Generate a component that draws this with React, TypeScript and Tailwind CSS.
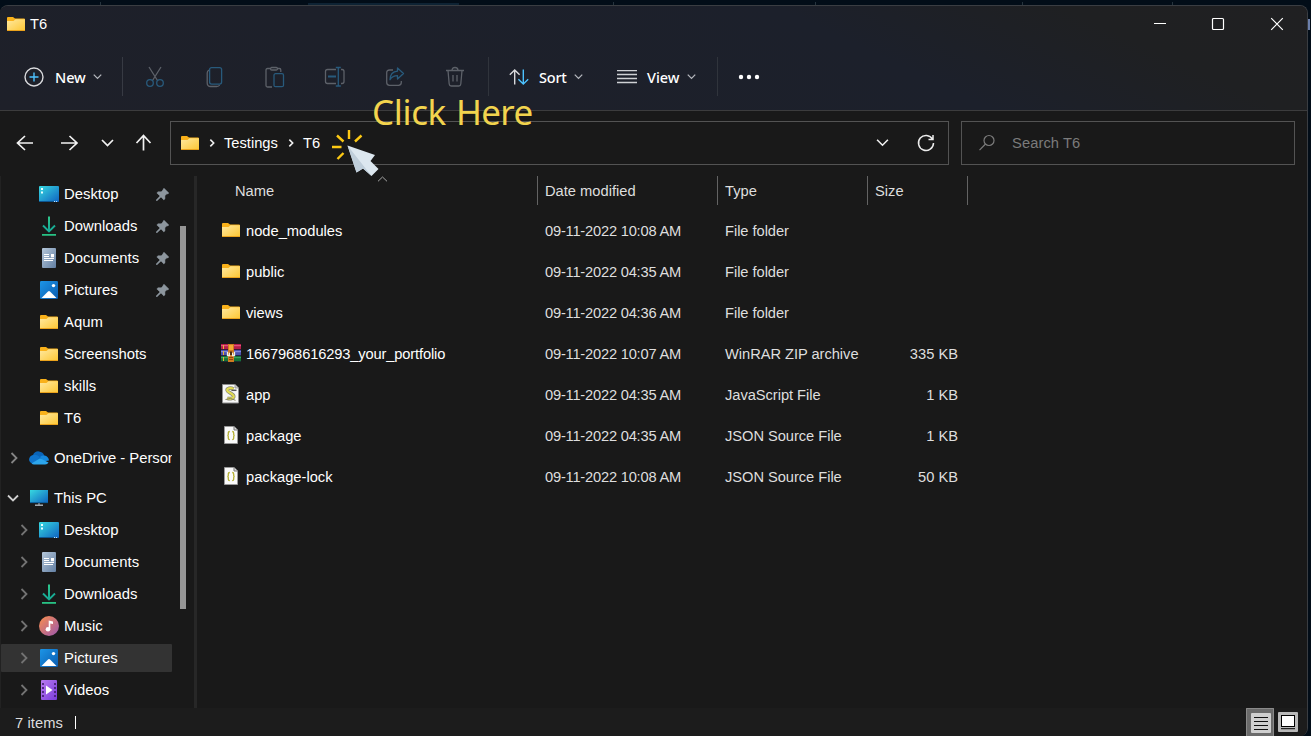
import React from "react";

type IconProps = { className?: string };

const Folder = ({ className = "" }: IconProps) => (
  <svg width="18" height="14" viewBox="0 0 18 14" className={`shrink-0 ${className}`}>
    <defs>
      <linearGradient id="folderFace" x1="0" y1="0" x2="1" y2="1">
        <stop offset="0" stopColor="#ffe9a0" />
        <stop offset="1" stopColor="#fdc632" />
      </linearGradient>
    </defs>
    <path d="M0 1q0-1 1-1h5l2 1.5h9q1 0 1 1V12H0z" fill="#f9b11a" />
    <path d="M0 4h6.5L8.5 2.3H18V14H0z" fill="url(#folderFace)" />
    <path d="M0 13.5h18" stroke="#eaa21c" />
  </svg>
);

const DesktopIcon = () => (
  <svg width="20" height="16" viewBox="0 0 20 16" className="shrink-0">
    <defs>
      <linearGradient id="desk" x1="0" y1="0" x2="1" y2="1">
        <stop offset="0" stopColor="#37d8e0" />
        <stop offset="1" stopColor="#0f62c0" />
      </linearGradient>
    </defs>
    <rect width="20" height="16" rx="1" fill="url(#desk)" />
    <path d="M2 2h2v2H2zM2 5.5h2v2H2z" fill="#e9ffff" />
    <path d="M0 15.5h15" stroke="#0d5590" />
    <path d="M15 15.5h1M17 15.5h1" stroke="#bfe4ff" />
  </svg>
);

const DownloadIcon = () => (
  <svg width="20" height="20" viewBox="0 0 20 20" className="shrink-0" fill="none">
    <defs>
      <linearGradient id="down" x1="0" y1="0" x2="0" y2="1">
        <stop offset="0" stopColor="#2fca8c" />
        <stop offset="1" stopColor="#14a596" />
      </linearGradient>
    </defs>
    <path d="M9 .5h2V15H9z" fill="url(#down)" />
    <path d="M4 9.5l6 6 6-6" stroke="#19ac94" strokeWidth="1.9" />
    <path d="M3 18.9h14" stroke="#27c284" strokeWidth="1.8" />
  </svg>
);

const DocumentIcon = () => (
  <svg width="20" height="20" viewBox="0 0 20 20" className="shrink-0">
    <defs>
      <linearGradient id="doc" x1="0" y1="0" x2="1" y2="1">
        <stop offset="0" stopColor="#b5c7da" />
        <stop offset="1" stopColor="#627fa3" />
      </linearGradient>
    </defs>
    <rect x="3" width="14" height="20" rx="1" fill="url(#doc)" />
    <path d="M5 6.5h5M5 8.5h5M5 10.500h10M5 12.500h9" stroke="#fff" strokeWidth="1.1" />
    <path d="M12 6h3v3.3h-3z" fill="#fff" />
  </svg>
);

const PictureIcon = () => (
  <svg width="18" height="18" viewBox="0 0 18 18" className="mx-px shrink-0">
    <defs>
      <linearGradient id="pic" x1="0" y1="0" x2="1" y2="1">
        <stop offset="0" stopColor="#1c95e6" />
        <stop offset="1" stopColor="#0a5cb0" />
      </linearGradient>
    </defs>
    <rect width="18" height="18" rx="1.2" fill="url(#pic)" />
    <path d="M1.500 17L8 10.400q1-.9 2 0L16.500 17z" fill="#fff" />
    <circle cx="13.500" cy="4.600" r="1.700" fill="#fff" />
  </svg>
);

const MusicIcon = () => (
  <svg width="20" height="20" viewBox="0 0 20 20" className="shrink-0">
    <defs>
      <linearGradient id="mus" x1="0" y1="0" x2="1" y2="1">
        <stop offset="0.1" stopColor="#f28a55" />
        <stop offset="1" stopColor="#9a56b0" />
      </linearGradient>
    </defs>
    <circle cx="10" cy="10" r="10" fill="url(#mus)" />
    <circle cx="9" cy="13.2" r="2.3" fill="#fff" />
    <path d="M9.700 4.400l4.300 1.200v2.500l-2.700-.7v6h-1.600z" fill="#fff" />
  </svg>
);

const VideoIcon = () => (
  <svg width="20" height="20" viewBox="0 0 20 20" className="shrink-0">
    <defs>
      <linearGradient id="vid" x1="0" y1="0" x2="1" y2="1">
        <stop offset="0" stopColor="#b87af0" />
        <stop offset="1" stopColor="#7a3cdc" />
      </linearGradient>
    </defs>
    <rect x="2" width="16" height="20" rx="1" fill="url(#vid)" />
    <path d="M4 3v15M16 3v15" stroke="#3f1c6c" strokeWidth="1.6" strokeDasharray="2 2" />
    <path d="M7 5.500l6.500 4.500L7 14.500z" fill="#fff" />
  </svg>
);

const CloudIcon = () => (
  <svg width="20" height="14" viewBox="0 0 20 14" className="shrink-0">
    <path d="M4.500 12.500A4.400 4.400 0 0 1 4 4a6 6 0 0 1 11.300.8L17 8 5 12.500z" fill="#0a64b8" />
    <path d="M4 4.200C6 3 9 4 11 6.300L5 12.700C-1.500 12.800-1.300 5 4 4.200z" fill="#0f74cc" />
    <path d="M11 6a5 5 0 0 1 4.400-1.400C18 5 20 7 20 9.500l-6 1z" fill="#1587dc" />
    <path d="M2.500 12.500L11 7.200l8.500 4.300Q18.500 13.500 16 13.500H5Q3.500 13.500 2.500 12.500z" fill="#2ca5ec" />
  </svg>
);

const PcIcon = () => (
  <svg width="18" height="16" viewBox="0 0 18 16" className="mx-px shrink-0">
    <rect width="18" height="13" fill="url(#desk)" />
    <path d="M0 12.600h18" stroke="#0b5d9a" />
    <path d="M8 13.300h2v1.500H8z" fill="#76838f" />
    <path d="M5 15.200h8" stroke="#b9c2ca" strokeWidth="1.300" />
  </svg>
);

const Pin = () => (
  <svg width="13" height="13" viewBox="0 0 13 13" className="shrink-0">
    <path
      d="M8 .2L12.800 5l-1 1-.9-.2-2 2 .1 3-1.200 1.100L5 9 1 12.800H.2v-.8L4 8 .8 4.900l1.300-1.200 3.100.1 2-2L7 1.200z"
      fill="#8d969e"
      stroke="#8d969e"
      strokeWidth=".5"
    />
  </svg>
);

const Chevron = ({
  dir = "right",
  color = "#858585",
  w = 1.8,
  size = 12,
}: {
  dir?: "right" | "down";
  color?: string;
  w?: number;
  size?: number;
}) => (
  <svg width={size} height={size} viewBox="0 0 12 12" fill="none" stroke={color} strokeWidth={w} className="shrink-0">
    {dir === "right" ? <path d="M3.500 1l5 5-5 5" /> : <path d="M1 3.500l5 5 5-5" />}
  </svg>
);

const ZipIcon = () => (
  <svg width="20" height="18" viewBox="0 0 20 18" className="shrink-0">
    <path d="M0 0h20v6H0z" fill="#b51d4a" />
    <path d="M0 1h20v1.200H0z" fill="#e0527c" />
    <path d="M0 6h20v6H0z" fill="#4b50ae" />
    <path d="M0 7h20v1.200H0z" fill="#8388dc" />
    <path d="M0 12h20v6H0z" fill="#157337" />
    <path d="M0 13h20v1.200H0z" fill="#3aa35f" />
    <path d="M0 5.500h20M0 11.500h20M0 17.600h20" stroke="#1d1733" strokeWidth=".8" />
    <path d="M2.500 1v4M2.500 7v4M2.500 13v4" stroke="#e8b13a" />
    <path d="M7 0h6v18H7z" fill="#cf7a20" />
    <path d="M8 1h4v5H8z" fill="#f2aa35" />
    <path d="M6.500 8v3.500h2V9.300h3v2.200h2V8" fill="none" stroke="#f1efe6" strokeWidth="1.300" />
    <path d="M9 7.500h2V11H9z" fill="#4b2a12" />
    <path d="M8 13.500h4M8 15.500h4" stroke="#8b3d12" strokeWidth=".9" />
  </svg>
);

const JsIcon = () => (
  <svg width="18" height="20" viewBox="0 0 18 20" className="mx-px shrink-0">
    <path d="M.5.5h12.500l3.500 3.500v15H.5z" fill="#f7f7f7" stroke="#8c8c8c" />
    <path d="M13 .5v3.500h3.500" fill="#cfcfcf" stroke="#8c8c8c" strokeWidth=".8" />
    <path
      d="M11.500 5C8.500 3.300 4.800 4.300 5.200 6.500c.4 2 6.300 3 6.500 5.700.2 2.300-3.500 3-6.500 2"
      fill="none"
      stroke="#8a8a78"
      strokeWidth="3.600"
    />
    <path
      d="M11.500 5C8.500 3.300 4.800 4.300 5.200 6.500c.4 2 6.300 3 6.500 5.700.2 2.300-3.500 3-6.500 2"
      fill="none"
      stroke="#e2dc52"
      strokeWidth="2.200"
    />
    <path d="M3.500 15.500q5-2.500 10 .8" fill="none" stroke="#85855f" />
    <path d="M9.500 6.300h5" stroke="#555" strokeWidth="1.500" />
  </svg>
);

const JsonIcon = () => (
  <svg width="14" height="18" viewBox="0 0 14 18" className="mx-[3px] shrink-0">
    <path d="M.5.5H10L13.500 4v13.500H.5z" fill="#fafafa" stroke="#9a9a9a" />
    <path d="M10 .5V4h3.500" fill="#ddd" stroke="#777" />
    <path
      d="M5.800 5.500q-1.500 0-1.500 1.400v1.500q0 1-1 1 1 0 1 1v1.900q0 1.400 1.500 1.400M8.200 5.500q1.500 0 1.500 1.400v1.500q0 1 1 1-1 0-1 1v1.900q0 1.400-1.500 1.400"
      fill="none"
      stroke="#b5b034"
      strokeWidth="1.300"
    />
  </svg>
);

const quick = [
  { icon: <DesktopIcon />, label: "Desktop", pin: true },
  { icon: <DownloadIcon />, label: "Downloads", pin: true },
  { icon: <DocumentIcon />, label: "Documents", pin: true },
  { icon: <PictureIcon />, label: "Pictures", pin: true },
  { icon: <Folder className="mx-px" />, label: "Aqum" },
  { icon: <Folder className="mx-px" />, label: "Screenshots" },
  { icon: <Folder className="mx-px" />, label: "skills" },
  { icon: <Folder className="mx-px" />, label: "T6" },
];

const pc = [
  { icon: <DesktopIcon />, label: "Desktop" },
  { icon: <DocumentIcon />, label: "Documents" },
  { icon: <DownloadIcon />, label: "Downloads" },
  { icon: <MusicIcon />, label: "Music" },
  { icon: <PictureIcon />, label: "Pictures", active: true },
  { icon: <VideoIcon />, label: "Videos" },
];

const files = [
  { icon: <Folder className="mx-px" />, name: "node_modules", date: "09-11-2022 10:08 AM", type: "File folder", size: "" },
  { icon: <Folder className="mx-px" />, name: "public", date: "09-11-2022 04:35 AM", type: "File folder", size: "" },
  { icon: <Folder className="mx-px" />, name: "views", date: "09-11-2022 04:36 AM", type: "File folder", size: "" },
  { icon: <ZipIcon />, name: "1667968616293_your_portfolio", date: "09-11-2022 10:07 AM", type: "WinRAR ZIP archive", size: "335 KB", tight: true },
  { icon: <JsIcon />, name: "app", date: "09-11-2022 04:35 AM", type: "JavaScript File", size: "1 KB" },
  { icon: <JsonIcon />, name: "package", date: "09-11-2022 04:35 AM", type: "JSON Source File", size: "1 KB" },
  { icon: <JsonIcon />, name: "package-lock", date: "09-11-2022 10:08 AM", type: "JSON Source File", size: "50 KB" },
];

const GREY = "#5d6169";
const BLUE = "#285a7c";

const Tool = ({ children }: { children: React.ReactNode }) => (
  <div className="flex w-[60px] justify-center">
    <svg width="22" height="22" viewBox="0 0 22 22" fill="none" strokeWidth="1.3">
      {children}
    </svg>
  </div>
);

const ToolChevron = () => (
  <span className="flex">
    <Chevron dir="down" color="#b5b8be" w={1.7} size={9} />
  </span>
);

const Toolbar = () => (
  <div className="flex h-[68px] items-center pt-[1px] font-['Noto_Sans',sans-serif] text-[14.500px] font-medium text-white">
    <div className="flex h-full w-[122px] items-center pl-6">
      <svg width="20" height="20" viewBox="0 0 20 20" fill="none" className="shrink-0">
        <circle cx="10" cy="10" r="9" stroke="#d8d9dc" strokeWidth="1.400" />
        <path d="M10 5.500v9M5.500 10h9" stroke="#4cc2ff" strokeWidth="1.400" />
      </svg>
      <span className="ml-[11px] mr-[7px] w-[31px] tracking-[-0.100px]">New</span>
      <ToolChevron />
    </div>
    <div className="h-[39px] w-px bg-[#373a43]" />
    <div className="ml-[2px] flex">
      <Tool>
        <path d="M5 1l8.800 14M17 1L8.200 15" stroke={GREY} />
        <circle cx="6" cy="17" r="3.300" stroke={BLUE} />
        <circle cx="16" cy="17" r="3.300" stroke={BLUE} />
      </Tool>
      <Tool>
        <path d="M5 4Q3.200 5 3.200 7v10q0 3.500 3.500 3.500h6q2 0 3-1.500" stroke={GREY} />
        <rect x="5.600" y="1.600" width="12" height="16.500" rx="2" stroke={BLUE} />
      </Tool>
      <Tool>
        <path d="M6 2.500H3.500q-1.500 0-1.500 1.500v15.500q0 1.500 1.500 1.500h4.500M14 2.500h1.500q1.300 0 1.300 1.500v2" stroke={GREY} />
        <rect x="6.500" y="1.500" width="7" height="2.500" rx="1.200" stroke={GREY} />
        <rect x="10" y="7.700" width="9.500" height="13" rx="1.500" stroke={BLUE} />
      </Tool>
      <Tool>
        <path d="M12 3.500H3.500q-2 0-2 2v10q0 2 2 2H12M17 3.500h1q2 0 2 2v10q0 2-2 2h-1" stroke={GREY} />
        <path d="M4 10.500h8" stroke={BLUE} strokeWidth="2" />
        <path d="M14.300 1.500v18.500M11.800 1.500h5M11.800 20h5" stroke={BLUE} />
      </Tool>
      <Tool>
        <path d="M9 4H5.500Q2.700 4 2.700 6.800v9.700q0 2.800 2.800 2.800h9q2.800 0 2.800-2.800V15" stroke={GREY} />
        <path d="M13.500 2l6 5.500-6 5.500v-3.300q-5 0-7.500 4 .3-8 7.500-8.500z" stroke={BLUE} strokeLinejoin="round" />
      </Tool>
      <Tool>
        <path d="M2 4.500h18M8 4.500q0-3 3-3t3 3M4 4.500l1.200 13.500q.2 2 2 2h7.600q1.800 0 2-2L18 4.500M9 9v6.500M13 9v6.500" stroke={GREY} />
      </Tool>
    </div>
    <div className="ml-[3px] h-[39px] w-px bg-[#30343c]" />
    <div className="flex items-center pl-5">
      <svg width="20" height="18" viewBox="0 0 20 18" fill="none" strokeWidth="1.400">
        <path d="M5.700 16.500V2M.8 6.800L5.700 2l4.900 4.800" stroke="#d8d9dc" />
        <path d="M14.300 1.500V16M9.400 11.200l4.900 4.800 4.900-4.800" stroke="#4cc2ff" />
      </svg>
      <span className="ml-[10px] mr-[6px] w-[29px] tracking-[-0.200px]">Sort</span>
      <ToolChevron />
    </div>
    <div className="flex items-center pl-[34px]">
      <svg width="20" height="14" viewBox="0 0 20 14" stroke="#cfd1d5" strokeWidth="1.300">
        <path d="M0 .5h20M0 4.500h20M0 8.500h20M0 12.500h20" />
      </svg>
      <span className="ml-[10px] mr-[7px] w-[33px]">View</span>
      <ToolChevron />
    </div>
    <div className="ml-[21px] h-[39px] w-px bg-[#30343c]" />
    <svg width="22" height="6" viewBox="0 0 22 6" fill="#fff" className="ml-5">
      <circle cx="3" cy="3" r="2.200" />
      <circle cx="11" cy="3" r="2.200" />
      <circle cx="19" cy="3" r="2.200" />
    </svg>
  </div>
);

const AddressRow = () => (
  <div className="flex h-[65px] items-start pt-[10px]">
    <div className="flex h-[44px] w-[170px] items-center">
      <svg width="170" height="24" viewBox="0 0 170 24" fill="none" stroke="#f2f2f2" strokeWidth="1.700">
        <path d="M33 12H18M25 5l-7.500 7 7.500 7" />
        <path d="M61 12h15M69.500 5l7.500 7-7.500 7" />
        <path d="M102 9l5.500 5.500L113 9" />
        <path d="M143.500 19.500V5M136.500 12l7-7.500 7 7.500" />
      </svg>
    </div>
    <div className="flex h-[44px] w-[779px] items-center border border-[#535353] pb-px pl-[10px] pr-3 text-white">
      <Folder />
      <span className="ml-[9px] flex"><Chevron color="#eee" w={2.400} size={8} /></span>
      <span className="ml-[8px] w-[55px]">Testings</span>
      <span className="ml-[8px] flex"><Chevron color="#eee" w={2.400} size={8} /></span>
      <span className="ml-[8px] flex-1">T6</span>
      <Chevron dir="down" color="#ececec" w={1.500} size={13} />
      <svg width="20" height="20" viewBox="0 0 20 20" fill="none" stroke="#ececec" strokeWidth="1.500" className="ml-[27px]">
        <path d="M16.500 6.200A7.500 7.500 0 1 0 17.500 10M17 2v4.500h-4.500" />
      </svg>
    </div>
    <div className="ml-3 flex h-[44px] w-[334px] items-center border border-[#535353] pl-4 text-[#7b7b7b]">
      <svg width="18" height="18" viewBox="0 0 18 18" fill="none" stroke="#7b7b7b" strokeWidth="1.200">
        <circle cx="11" cy="6.500" r="5" />
        <path d="M7.500 10L1.500 16.200" />
      </svg>
      <span className="ml-4 tracking-[0.100px]">Search T6</span>
    </div>
  </div>
);

const Sidebar = () => (
  <div className="flex w-[194px] shrink-0 border-l border-[#222] text-[14.850px] text-white">
    <div className="flex w-[171px] flex-col overflow-hidden whitespace-nowrap pt-0.5">
      {quick.map((q) => (
        <div key={q.label} className="flex h-8 shrink-0 items-center pl-[38px]">
          {q.icon}
          <span className="ml-[5px] flex-1">{q.label}</span>
          {q.pin && <span className="mr-[3px] flex"><Pin /></span>}
        </div>
      ))}
      <div className="mt-2 flex h-8 shrink-0 items-center pl-[7px]">
        <Chevron />
        <span className="ml-[9px] flex"><CloudIcon /></span>
        <span className="ml-[5px] tracking-[-0.050px]">OneDrive - Personal</span>
      </div>
      <div className="mt-2 flex h-8 shrink-0 items-center pl-[6px]">
        <Chevron dir="down" color="#cfcfcf" />
        <span className="ml-[10px] flex"><PcIcon /></span>
        <span className="ml-[5px]">This PC</span>
      </div>
      {pc.map((p) => (
        <div
          key={p.label}
          className={`my-0.5 flex h-7 shrink-0 items-center rounded-[1px] pl-[17px] ${p.active ? "bg-[#333333]" : ""}`}
        >
          <Chevron color="#737373" />
          <span className="ml-[9px] flex">{p.icon}</span>
          <span className="ml-[5px]">{p.label}</span>
        </div>
      ))}
    </div>
    <div className="ml-2 mt-[50px] h-[383px] w-1.5 bg-[#969696]" />
  </div>
);

const FileList = () => (
  <div className="flex flex-1 flex-col">
    <div className="mb-1 flex h-[30px] items-start text-[#dedede]">
      <div className="relative flex h-[29px] w-[340px] items-center pl-[38px]">
        Name
        <svg width="11" height="6" viewBox="0 0 11 6" fill="none" stroke="#a5a5a5" className="absolute left-[180px] top-0">
          <path d="M1 5.300L5.500 1 10 5.300" />
        </svg>
      </div>
      <div className="flex h-[29px] w-[180px] items-center border-l border-[#636363] pl-[7px]">Date modified</div>
      <div className="flex h-[29px] w-[150px] items-center border-l border-[#636363] pl-[7px]">Type</div>
      <div className="flex h-[29px] w-[101px] items-center border-x border-[#636363] pl-[7px]">Size</div>
    </div>
    {files.map((f) => (
      <div key={f.name} className="flex h-[41px] items-center whitespace-nowrap text-[#dedede]">
        <div className="flex w-[340px] items-center pl-[24px] text-white">
          <span className="flex pb-[2px]">{f.icon}</span>
          <span className={`ml-[5px] ${f.tight ? "tracking-[-0.150px]" : ""}`}>{f.name}</span>
        </div>
        <div className="w-[180px] pl-2 tracking-[-0.220px]">{f.date}</div>
        <div className="w-[150px] pl-2 tracking-[-0.050px]">{f.type}</div>
        <div className="w-[91px] text-right">{f.size}</div>
      </div>
    ))}
  </div>
);

const ClickHere = () => (
  <>
    <div className="absolute left-[372px] top-[90px] flex gap-[10px] whitespace-nowrap font-['Noto_Sans',sans-serif] text-[35px] leading-[44px] text-[#f2d44e]">
      <span className="tracking-[-0.350px]">Click</span>
      <span className="tracking-[-0.650px]">Here</span>
    </div>
    <svg width="50" height="52" viewBox="0 0 50 52" className="absolute left-[330px] top-[127px]">
      <path
        d="M19 3v9M7 8.500l6.500 6M31.500 8.500l-6.500 6M2 20h9.500M13.500 26L7.500 32"
        stroke="#fdc914"
        strokeWidth="2.400"
      />
      <path d="M17.500 18.500L45 28l-4.500 6L48.500 42l-7 7-8.500-7.500-6.500 4z" fill="#dce7ef" />
      <path d="M17.500 18.500L41.500 49l-8.500-7.500-6.500 4z" fill="#bfceda" />
    </svg>
  </>
);

export default function App() {
  return (
    <div className="relative flex h-[736px] w-[1311px] flex-col overflow-hidden bg-[#020d18] font-['Liberation_Sans',Arial,sans-serif] text-[14.700px] leading-5">
      <div className="flex h-[5px] shrink-0 items-end pl-[100px]">
        <div className="h-[3px] w-px bg-[#26343e]" />
        <div className="ml-[207px] h-[2px] w-[151px] bg-[#0e2334]" />
        <div className="ml-[154px] h-[3px] w-px bg-[#26343e]" />
        <div className="ml-[201px] h-[3px] w-px bg-[#26343e]" />
        <div className="ml-[206px] h-[3px] w-px bg-[#26343e]" />
        <div className="ml-[149px] h-[3px] w-px bg-[#26343e]" />
      </div>
      <div className="flex min-h-0 w-[1308px] flex-1 flex-col overflow-hidden rounded-t-lg rounded-br-lg border-r border-t border-[#3a3d42] bg-[#191919]">
        <div className="flex h-[105px] shrink-0 flex-col border-b border-[#3c3c3d] bg-[linear-gradient(25deg,#1e2029_0%,#1c202b_65%,#1f2022_84%,#202022_100%)]">
          <div className="flex h-[36px] items-center pl-[7px] text-white">
            <Folder />
            <span className="ml-[5px] flex-1">T6</span>
            <svg width="131" height="14" viewBox="0 0 131 14" fill="none" stroke="#fff" strokeWidth="1.200" className="mr-[23px]">
              <path d="M1 6.500h12" />
              <rect x="59.500" y="1.500" width="11" height="11" rx="1" />
              <path d="M118.200 1.200l11.600 11.600M129.800 1.200l-11.600 11.600" />
            </svg>
          </div>
          <Toolbar />
        </div>
        <AddressRow />
        <div className="flex h-[532px] shrink-0">
          <Sidebar />
          <div className="w-[3px] bg-[#272727]" />
          <FileList />
        </div>
        <div className="flex flex-1 items-center bg-[#1c1c1c] pl-[15px] text-[#dedede]">
          <span className="w-[60px] pt-px tracking-[0.100px]">7 items</span>
          <div className="h-[13px] w-px bg-white" />
          <svg width="54" height="28" viewBox="0 0 54 28" className="ml-auto mr-[7px]">
            <path d="M0 0h28v28H0z" fill="#6b6b6b" />
            <path d="M.5 28V.5h27V28" fill="none" stroke="#8a8a8a" />
            <rect x="5" y="5" width="20" height="20" rx="1" fill="#cfcfcf" />
            <path d="M8 9.500h14M8 13.500h14M8 17.500h14M8 21.500h14" stroke="#111" />
            <rect x="32" y="4" width="20" height="20" rx="1" fill="#b9b9b9" />
            <rect x="35.500" y="7.500" width="13" height="11" fill="#fff" stroke="#000" />
            <path d="M35 20.700h14" stroke="#000" />
          </svg>
        </div>
      </div>
      <div className="absolute left-[1308px] top-[19px] h-[11px] w-[2px] bg-[#6b7fab]" />
      <ClickHere />
    </div>
  );
}
